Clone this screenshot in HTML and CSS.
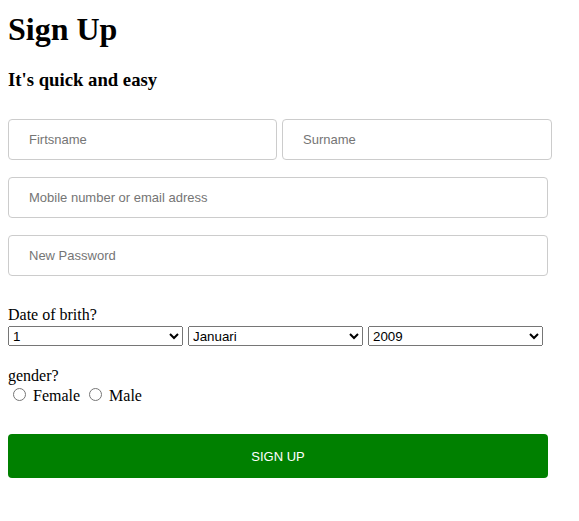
FILE: index.html
```html
<!DOCTYPE html>
<html>
<head>
<meta charset="utf-8">
<link rel="stylesheet" href="styles.css">
</head>
<body>
<h1 class="title">Sign Up</h1>
<h3 class="subtitle">It's quick and easy</h3>
<form class="form">
  <div class="name-row">
    <input class="field first" type="text" placeholder="Firtsname">
    <input class="field last" type="text" placeholder="Surname">
  </div>
  <input class="field full" type="text" placeholder="Mobile number or email adress">
  <input class="field full" type="password" placeholder="New Password">
  <div class="group dob">
    <div class="label">Date of brith?</div>
    <div class="selects">
      <select class="sel"><option>1</option></select>
      <select class="sel"><option>Januari</option></select>
      <select class="sel"><option>2009</option></select>
    </div>
  </div>
  <div class="group gender">
    <div class="label">gender?</div>
    <div class="radios"><input type="radio" name="g" class="radio"> Female <input type="radio" name="g" class="radio"> Male</div>
  </div>
  <button type="button" class="submit">SIGN UP</button>
</form>
</body>
</html>
```
FILE: styles.css
```css
body {
  margin: 8px;
  font-family: "Liberation Serif", "Times New Roman", serif;
  font-size: 16px;
  color: #000;
  background: #fff;
}
.title {
  font-size: 32px;
  font-weight: bold;
  margin: 3px 0 21px;
  line-height: normal;
}
.subtitle {
  font-size: 18.72px;
  font-weight: bold;
  margin: 0;
  line-height: normal;
}
.form {
  display: flex;
  flex-direction: column;
  margin-top: 28px;
}
.name-row {
  display: flex;
  gap: 5px;
  margin-bottom: 17px;
}
.field {
  box-sizing: border-box;
  height: 41px;
  border: 1px solid #ccc;
  border-radius: 4px;
  padding: 0 20px;
  font-family: "Liberation Sans", Arial, sans-serif;
  font-size: 13px;
  color: #333;
  background: #fff;
  outline: none;
}
.field::placeholder {
  color: #757575;
}
.first {
  width: 269px;
}
.last {
  width: 270px;
}
.full {
  width: 540px;
  margin-bottom: 17px;
}
.dob {
  margin-top: 13px;
}
.label {
  line-height: normal;
}
.selects {
  display: flex;
  gap: 5px;
  margin-top: 2px;
}
.sel {
  box-sizing: border-box;
  width: 175px;
  height: 20px;
  font-family: "Liberation Sans", Arial, sans-serif;
  font-size: 13.33px;
}
.gender {
  margin-top: 21px;
}
.radios {
  line-height: normal;
}
.radio {
  margin: 3px 3px 0 5px;
}
.submit {
  margin-top: 29px;
  width: 540px;
  height: 44px;
  border: none;
  border-radius: 4px;
  background: #008000;
  color: #fff;
  font-family: "Liberation Sans", Arial, sans-serif;
  font-size: 13px;
  cursor: pointer;
}
```
